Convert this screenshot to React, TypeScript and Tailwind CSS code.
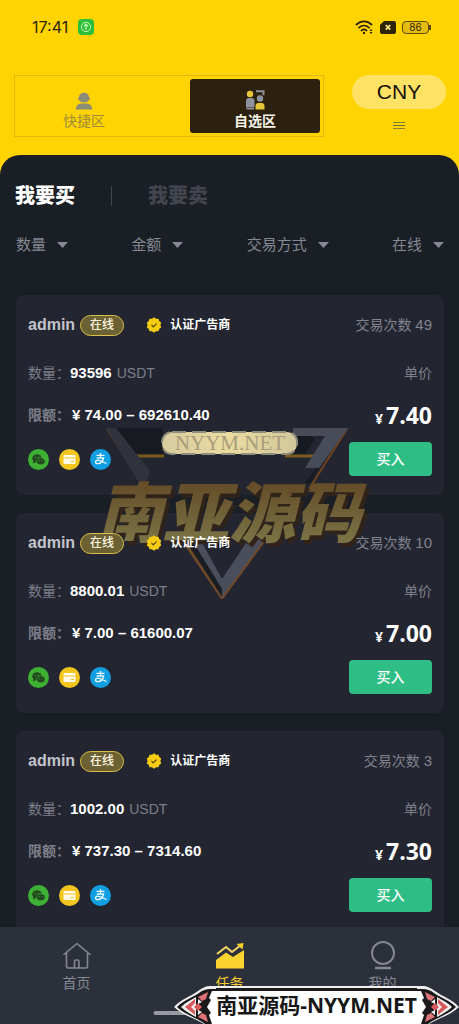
import { clsx } from 'clsx'

type Offer = {
  amount: string
  range: string
  price: string
  trades: number
}

const offers: Offer[] = [
  { amount: '93596', range: '74.00 – 692610.40', price: '7.40', trades: 49 },
  { amount: '8800.01', range: '7.00 – 61600.07', price: '7.00', trades: 10 },
  { amount: '1002.00', range: '737.30 – 7314.60', price: '7.30', trades: 3 },
]

const filters = ['数量', '金额', '交易方式', '在线']

function StatusBar() {
  return (
    <div className="flex h-[54px] items-center justify-between pr-7 pl-8 text-[#2d240a]">
      <div className="flex items-center gap-[10px]">
        <span className="font-[Inter] text-base">17:41</span>
        <svg viewBox="0 0 16 16" className="size-4">
          <rect width="16" height="16" rx="4" fill="#2cbf3c" />
          <circle cx="8" cy="8" r="4.6" fill="none" stroke="#c8f5b4" strokeWidth="1" />
          <path d="M8 11V5.5M5.8 7.4 8 5.3l2.2 2.1" fill="none" stroke="#c8f5b4" strokeWidth="1.2" />
        </svg>
      </div>
      <div className="flex items-center gap-[6px]">
        <svg viewBox="0 0 19 16" className="h-4 w-[19px]">
          <g fill="none" stroke="currentColor" strokeWidth="1.8" strokeLinecap="round">
            <path d="M1.5 5.5c4.3-4.2 10.7-4.2 15 0" />
            <path d="M4 8.7c3-2.8 7-2.8 10 0" />
            <path d="M6.5 11.5c1.5-1.3 3.5-1.3 5 0" />
          </g>
          <circle cx="9" cy="14" r="1.2" fill="currentColor" />
          <path d="m14.5 12 1.5-2 1.5 2zM14.5 13l1.5 2 1.5-2z" fill="currentColor" />
        </svg>
        <svg viewBox="0 0 16 13" className="h-[13px] w-4">
          <path d="M4 0h10a2 2 0 0 1 2 2v9a2 2 0 0 1-2 2H2a2 2 0 0 1-2-2V4z" fill="currentColor" />
          <path d="m5.8 4 4.4 4.6M10.2 4 5.8 8.6" stroke="#ffe27a" strokeWidth="1.8" />
        </svg>
        <div className="flex items-center">
          <span className="flex h-[13px] w-[27px] items-center justify-center rounded-[4px] border border-[#5c4a0a] bg-[#e6bd0e] font-[Inter] text-[10px] leading-none">
            86
          </span>
          <span className="h-[5px] w-[2px] bg-[#5c4a0a]" />
        </div>
      </div>
    </div>
  )
}

function Header() {
  return (
    <header className="flex items-start justify-between pt-[21px] pr-[13px] pb-[18px] pl-[14px]">
      <div className="flex h-[62px] w-[310px] border border-[#e3b80c] p-[3px] text-sm">
        <button className="flex flex-1 flex-col items-center justify-end gap-[2px] pr-10 pb-[3px] text-[#a08c3c]">
          <svg viewBox="0 0 18 18" className="size-[18px]" fill="#8b8b78">
            <path d="M4 5.5C4 2.5 6.300.8 9 .8s5 1.700 5 4.700l1.500.8-1.200.9c-.6 2.200-2.500 3.300-5.300 3.300S4.300 9.400 3.700 7.200l-1.200-.9z" />
            <path d="M.8 17.5c0-4 2.900-6 6-6h4.400c3.100 0 6 2 6 6z" />
          </svg>
          <span className="leading-[18px]">快捷区</span>
        </button>
        <button className="flex w-[130px] flex-col items-center justify-end gap-[2px] rounded-[3px] bg-[#2b210e] pb-[3px] font-bold text-[#f7f3e8]">
          <svg viewBox="0 0 20 20" className="size-5">
            <circle cx="5" cy="4" r="3.2" fill="#e8c63a" />
            <path d="M1 17v-6c0-2 1-3 3-3h2.500c2 0 3 1 3 3v6z" fill="#8d929c" />
            <path d="M1 17.5h8v2H2.500c-1 0-1.500-1-1.500-2z" fill="#8d929c" />
            <path d="M11 1.200h7.500v4" fill="none" stroke="#8d929c" strokeWidth="2" />
            <circle cx="15" cy="8.5" r="3.2" fill="#8d929c" />
            <path d="M10.500 19.500V16c0-2 1-3 3-3h3c2 0 3 1 3 3v3.500z" fill="#e8c63a" />
          </svg>
          <span className="leading-[18px]">自选区</span>
        </button>
      </div>
      <div className="flex flex-col items-center">
        <button className="h-[34px] w-[94px] rounded-full bg-[#ffe163] text-[21px] text-[#14110a]">
          CNY
        </button>
        <button aria-label="菜单" className="mt-[13px] flex flex-col gap-[2px]">
          <span className="h-px w-3 bg-[#8f8130]" />
          <span className="h-px w-3 bg-[#6d6a45]" />
          <span className="h-px w-3 bg-[#8f8130]" />
        </button>
      </div>
    </header>
  )
}

function Filters() {
  return (
    <div className="flex items-center justify-between pr-[15px] pl-4 text-[15px] text-[#858892]">
      {filters.map((name) => (
        <label key={name} className="flex h-5 items-center gap-[10px]">
          <select aria-label={name} className="appearance-none bg-transparent leading-5">
            <option>{name}</option>
          </select>
          <svg viewBox="0 0 11 6" className="h-[6px] w-[11px]" fill="currentColor">
            <path d="M0 0h11L5.5 6z" />
          </svg>
        </label>
      ))}
    </div>
  )
}

function PayIcons() {
  return (
    <div className="flex gap-[10px]">
      <svg viewBox="0 0 21 21" className="size-[21px]">
        <circle cx="10.5" cy="10.5" r="10.5" fill="#3eb134" />
        <ellipse cx="9" cy="9.3" rx="4.8" ry="4" fill="#23481f" />
        <path d="m5.5 11.5-.6 3 3-1.6z" fill="#23481f" />
        <ellipse cx="12.8" cy="12.3" rx="4.2" ry="3.4" fill="#23481f" stroke="#3eb134" strokeWidth=".6" />
        <g fill="#3eb134">
          <circle cx="7.3" cy="8.3" r=".6" />
          <circle cx="10.3" cy="8.3" r=".6" />
          <circle cx="11.5" cy="11.7" r=".5" />
          <circle cx="14" cy="11.7" r=".5" />
        </g>
      </svg>
      <svg viewBox="0 0 21 21" className="size-[21px]">
        <circle cx="10.5" cy="10.5" r="10.5" fill="#f3c51f" />
        <path d="M5.5 6h10c.6 0 1 .4 1 1v1.500h-12V7c0-.6.4-1 1-1zM4.500 9.500h12V14c0 .6-.4 1-1 1h-10c-.6 0-1-.4-1-1z" fill="#fffbe8" />
        <path d="M11.5 12.500h3.500" stroke="#f3c51f" strokeWidth="1" />
      </svg>
      <svg viewBox="0 0 21 21" className="size-[21px]">
        <circle cx="10.5" cy="10.5" r="10.5" fill="#119fe2" />
        <path
          d="M6.5 6.300h8M10.500 4v5M6.800 9h6.800c-.6 2.500-2.600 5.600-5.600 5.600-3.400 0-3.200-3.400-.3-3.400 2.600 0 5 2 8.800 3.300"
          fill="none"
          stroke="#f0faff"
          strokeWidth="1.3"
        />
      </svg>
    </div>
  )
}

function OfferCard({ offer }: { offer: Offer }) {
  return (
    <article className="rounded-lg bg-[#232530] px-3 pt-5 pb-[19px]">
      <div className="relative z-10">
        <div className="flex h-5 items-center">
          <span className="text-base font-bold text-[#c3c4cb]">admin</span>
          <span className="ml-[5px] flex h-[21px] w-[44px] items-center justify-center rounded-full border border-[#d9c04a] bg-[#6c6133] text-xs font-medium text-[#fdf8e4]">
            在线
          </span>
          <svg viewBox="0 0 16 16" className="ml-[22px] size-4">
            <path
              d="m8 .3 2 1.500 2.500-.1.700 2.400 2 1.400L14.400 8l.8 2.400-2 1.500-.7 2.400-2.500-.1-2 1.500-2-1.500-2.500.1-.7-2.400-2-1.500L1.600 8 .8 5.500l2-1.400.7-2.400L6 1.800z"
              fill="#f6cd13"
            />
            <path d="m5.5 8 1.800 1.800 3.300-3.200" fill="none" stroke="#5b4c12" strokeWidth="1.2" />
          </svg>
          <span className="ml-2 text-xs font-bold text-white">认证广告商</span>
          <p className="ml-auto text-sm text-[#81838e]">
            交易次数 <span className="text-[15px]">{offer.trades}</span>
          </p>
        </div>

        <div className="mt-7 flex h-5 items-center justify-between text-sm text-[#7d7f8a]">
          <p className="flex items-center">
            数量：
            <b className="text-[15px] text-white">{offer.amount}</b>
            <span className="ml-[5px]">USDT</span>
          </p>
          <span>单价</span>
        </div>

        <div className="mt-[17px] flex h-[30px] items-center justify-between">
          <p className="flex items-center text-sm font-bold text-[#7d7f8a]">
            限额：
            <span className="ml-[2px] text-[15px] text-white">¥ {offer.range}</span>
          </p>
          <p className="flex items-baseline gap-[3px] font-['Open_Sans'] font-bold text-white">
            <span className="text-sm">¥</span>
            <span className="text-[23px] leading-[28px]">{offer.price}</span>
          </p>
        </div>

        <div className="mt-3 flex items-center justify-between">
          <PayIcons />
          <button className="h-[34px] w-[83px] rounded-[4px] bg-[#2ebd85] text-sm font-medium text-white">
            买入
          </button>
        </div>
      </div>
    </article>
  )
}

function Emblem() {
  return (
    <svg
      viewBox="0 0 290 180"
      className="pointer-events-none absolute top-[130px] left-1/2 z-0 h-[180px] w-[290px] -translate-x-1/2"
    >
      <defs>
        <linearGradient id="gold" x1="0" y1="0" x2="0" y2="1">
          <stop offset="0.2" stopColor="#634a26" />
          <stop offset="0.9" stopColor="#7c7648" />
        </linearGradient>
        <linearGradient id="plate" x1="0" y1="0" x2="1" y2="0">
          <stop offset="0" stopColor="#d8cba0" />
          <stop offset="0.5" stopColor="#eadba0" />
          <stop offset="1" stopColor="#d2c79b" />
        </linearGradient>
      </defs>
      <path d="M20 3h58v26H48L62 58H54z" fill="#171a20" />
      <path d="M212 7h-4v22h12l10-16zM226 58l12-24-18 24z" fill="#171a20" />
      <path d="M22 4 60 64M262 4l-38 60" stroke="#70431f" strokeWidth="2" />
      <path d="M47 31h32M200 31h32" stroke="#785c1b" strokeWidth="3" />
      <path d="M21 3h10l34 43-4 13-9-4z" fill="#30333d" />
      <path d="M208 3h55l-29 40h-14l20-32h-32z" fill="#484c59" />
      <path d="m99 116 38 56 44-60" fill="none" stroke="#714a29" strokeWidth="4" strokeLinejoin="round" />
      <path d="m102 112 35 60 44-60h-16l-28 42-23-42z" fill="#4a4e5a" />
      <path d="m98 112 39 60v-8l-32-52z" fill="#1b1d24" />
      <rect x="77" y="7" width="135" height="22" rx="10" fill="url(#plate)" stroke="#8f8d7c" strokeWidth="2" strokeDasharray="14 6" />
      <text x="145" y="25" textAnchor="middle" fontSize="21" fontFamily="Liberation Serif, serif" fill="#a89e7c">
        NYYM.NET
      </text>
      <text
        x="144"
        y="112"
        textAnchor="middle"
        fontSize="66"
        fontWeight="900"
        fontStyle="italic"
        fontFamily="Noto Sans CJK SC, sans-serif"
        fill="url(#gold)"
        className="drop-shadow-[3px_4px_0_#30241a]"
      >
        南亚源码
      </text>
    </svg>
  )
}

function BannerEnd({ flip = false }: { flip?: boolean }) {
  return (
    <svg viewBox="0 0 42 38" className={clsx('h-[38px] w-[42px] shrink-0', flip && '-scale-x-100')}>
      <path d="M0 21C7 13 16 11 24 5c4-3 8-5 12-5h6v38H30C22 33 8 29 0 21z" fill="#efefef" />
      <path d="M3 21c7-7 15-9 22-14 4-3 7-4 11-4h6v35H31C23 32 10 28 3 21z" fill="#1c191b" />
      <path d="M7 21c5-5 10-7 15-10v20c-5-3-10-5-15-10z" fill="#efefef" />
      <path d="m11 21 10-8v4l-4 4 4 4v4z" fill="#d8595b" />
      <path d="m20 21 4-4 4 4-4 4z" fill="#d8595b" />
      <path d="m24 11 10-5-2 7-4 2zM24 31l10 5-2-7-4-2z" fill="#df7478" />
      <path d="M24 13v5l4-2zM24 29v-5l4 2z" fill="#efefef" />
      <path d="M42 5h-4l-3 7 2 2-4 7 4 6-2 2 3 9h4z" fill="#ffffff" />
    </svg>
  )
}

function Banner() {
  return (
    <div className="pointer-events-none absolute right-0 bottom-0 flex h-[38px]">
      <BannerEnd />
      <div className="flex h-[38px] items-center bg-white font-['Open_Sans','Noto_Sans_CJK_SC',sans-serif] text-[21px] font-bold whitespace-nowrap text-[#161616] shadow-[inset_0_2px_0_#efefef,inset_0_5px_0_#1c191b]">
        南亚源码-NYYM.NET
      </div>
      <BannerEnd flip />
    </div>
  )
}

function BottomNav() {
  return (
    <nav className="relative h-[97px] shrink-0 bg-[#2b303b] text-sm text-[#858892]">
      <div className="grid grid-cols-3 pt-[14px]">
        <a href="#home" className="flex flex-col items-center gap-[2px]">
          <svg viewBox="0 0 30 30" className="size-[30px]" fill="none" stroke="currentColor" strokeWidth="1.6" strokeLinejoin="round" strokeLinecap="round">
            <path d="M2 13.5 15 2.500l13 11M4.500 12v13.500c0 .8.500 1.500 1.500 1.500h18c1 0 1.500-.7 1.500-1.500V12M12.500 27v-6.500c0-1 .7-1.500 1.500-1.500h1.500c1 0 1.500.5 1.500 1.500V27" />
          </svg>
          <span className="leading-5">首页</span>
        </a>
        <a href="#tasks" className="flex flex-col items-center gap-[2px] text-[#f3c92b]">
          <svg viewBox="0 0 30 30" className="size-[30px]">
            <path d="m2 13 9-7 6 5 9-7" fill="none" stroke="#f3d768" strokeWidth="2" />
            <path d="m21.5 3 7-1-1 6.500z" fill="#fbd22e" />
            <path d="M1 19 11 11.500l7 4.500L29 9v18.500H1z" fill="#fbd22e" />
          </svg>
          <span className="leading-5">任务</span>
        </a>
        <a href="#me" className="flex flex-col items-center gap-[2px]">
          <svg viewBox="0 0 30 30" className="size-[30px]" fill="none" stroke="currentColor">
            <circle cx="15" cy="12" r="11" strokeWidth="2" />
            <path d="M7 27h16" strokeWidth="2.5" />
          </svg>
          <span className="leading-5">我的</span>
        </a>
      </div>
      <span className="absolute bottom-[9px] left-1/2 h-1 w-[153px] -translate-x-1/2 rounded-full bg-[#979aa1]" />
      <Banner />
    </nav>
  )
}

export default function App() {
  return (
    <div className="flex h-screen flex-col overflow-hidden bg-[#ffd400] font-['Liberation_Sans','Noto_Sans_CJK_SC',sans-serif]">
      <StatusBar />
      <Header />
      <main className="flex min-h-0 flex-1 flex-col rounded-t-[20px] bg-[#1a1e25]">
        <div className="flex items-center px-[15px] pt-[26px] pb-[24px] text-[20px] leading-[30px] font-black">
          <button className="text-white">我要买</button>
          <span className="mx-9 h-5 w-px bg-[#42464f]" />
          <button className="text-[#42454e]">我要卖</button>
        </div>
        <Filters />
        <div className="relative mt-10 min-h-0 flex-1 overflow-hidden">
          <div className="flex flex-col gap-[18px] pr-[15px] pl-4">
            {offers.map((offer) => (
              <OfferCard key={offer.price} offer={offer} />
            ))}
          </div>
          <Emblem />
        </div>
      </main>
      <BottomNav />
    </div>
  )
}
